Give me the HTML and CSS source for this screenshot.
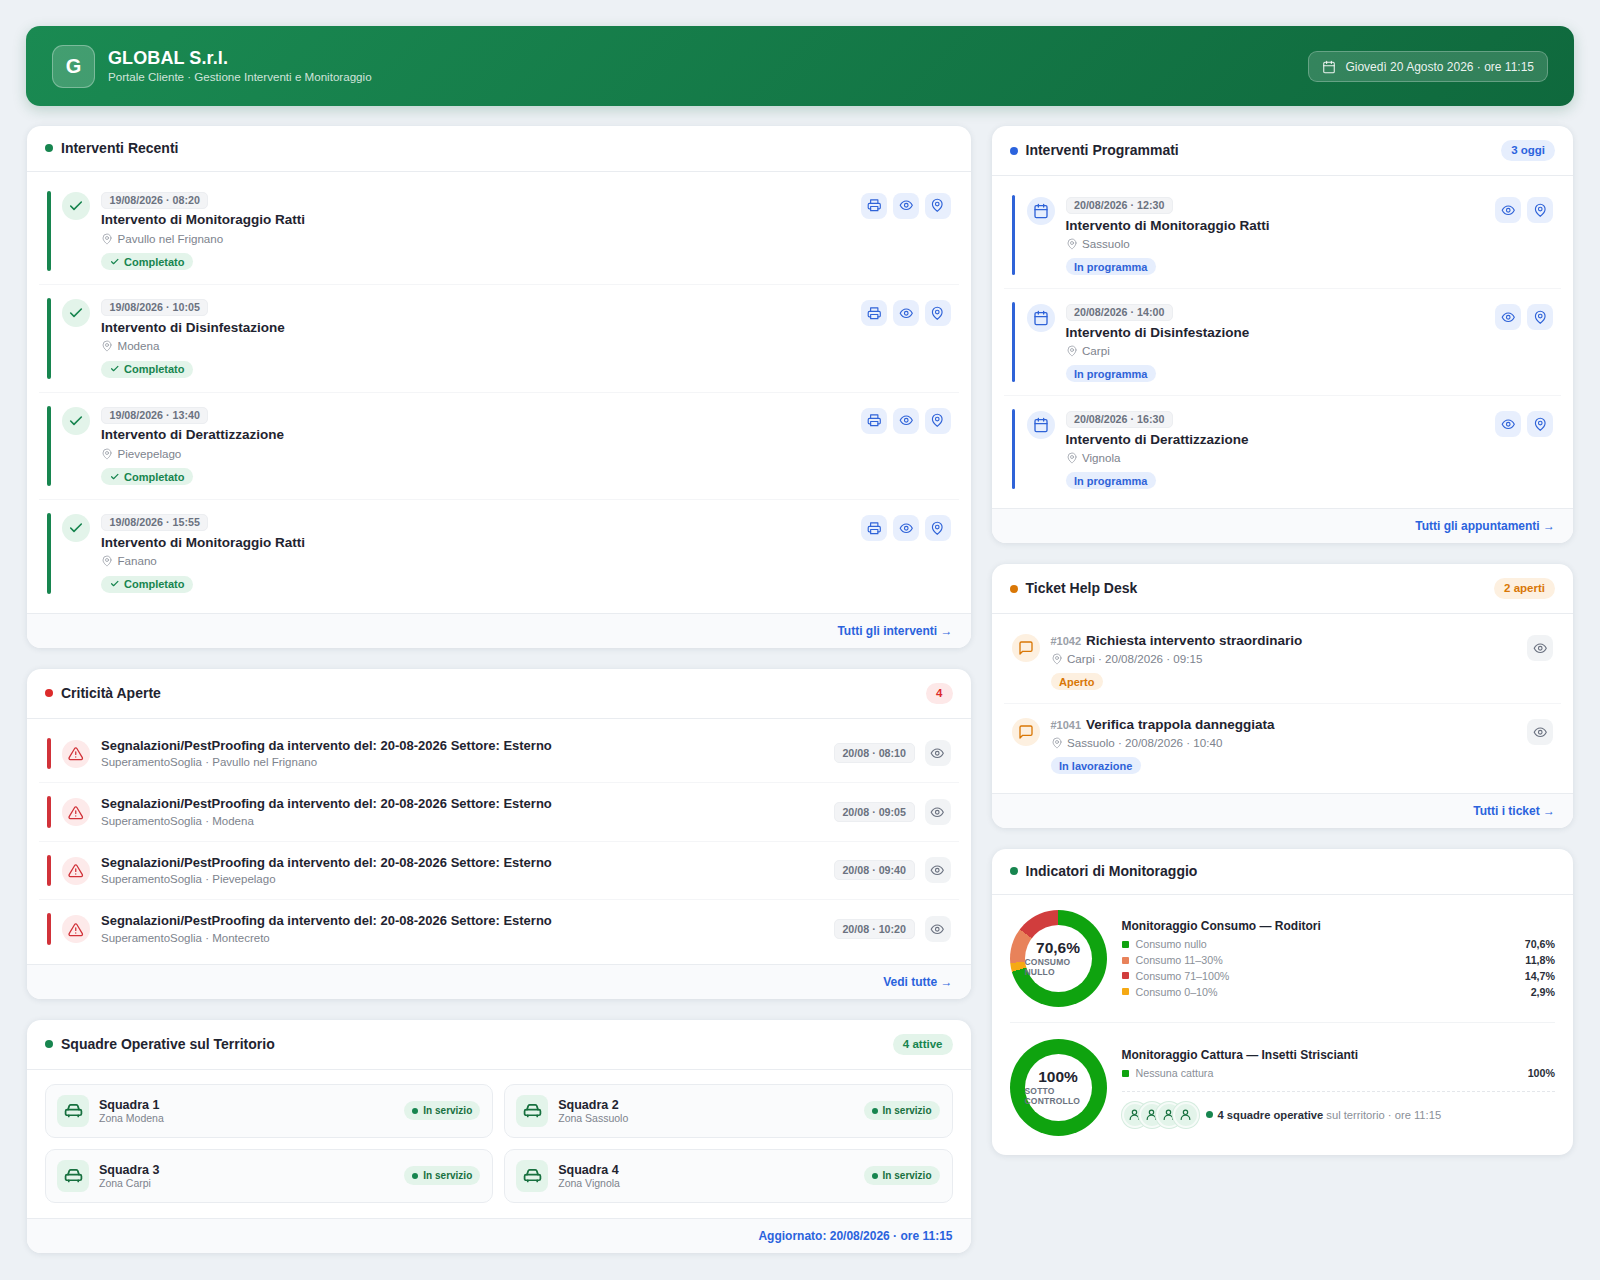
FILE: index.html
```html
<!DOCTYPE html>
<html lang="it">
<head>
    <meta charset="UTF-8">
    <meta name="viewport" content="width=device-width, initial-scale=1.0">
    <title>GLOBAL S.r.l. - Portale Cliente</title>
    <link rel="stylesheet" href="styles.css">
</head>
<body>
    <svg class="sprite" width="0" height="0">
        <symbol id="i-check" viewBox="0 0 24 24"><path d="M20 6 9 17l-5-5"/></symbol>
        <symbol id="i-print" viewBox="0 0 24 24"><path d="M6 9V3h12v6"/><path d="M6 18H4a2 2 0 0 1-2-2v-5a2 2 0 0 1 2-2h16a2 2 0 0 1 2 2v5a2 2 0 0 1-2 2h-2"/><path d="M6 14h12v7H6z"/></symbol>
        <symbol id="i-eye" viewBox="0 0 24 24"><path d="M2 12s3.600-7 10-7 10 7 10 7-3.600 7-10 7-10-7-10-7z"/><circle cx="12" cy="12" r="3"/></symbol>
        <symbol id="i-pin" viewBox="0 0 24 24"><path d="M20 10c0 6-8 12-8 12s-8-6-8-12a8 8 0 0 1 16 0z"/><circle cx="12" cy="10" r="3"/></symbol>
        <symbol id="i-cal" viewBox="0 0 24 24"><rect x="3" y="4" width="18" height="18" rx="2"/><path d="M16 2v4M8 2v4M3 10h18"/></symbol>
        <symbol id="i-alert" viewBox="0 0 24 24"><path d="M10.300 3.900 1.800 18a2 2 0 0 0 1.700 3h17a2 2 0 0 0 1.700-3L13.700 3.900a2 2 0 0 0-3.400 0z"/><path d="M12 9v4M12 17h.01"/></symbol>
        <symbol id="i-msg" viewBox="0 0 24 24"><path d="M21 15a2 2 0 0 1-2 2H7l-4 4V5a2 2 0 0 1 2-2h14a2 2 0 0 1 2 2z"/></symbol>
        <symbol id="i-car" viewBox="0 0 24 24"><path d="M5 11l1.500-4.500A2 2 0 0 1 8.400 5h7.200a2 2 0 0 1 1.900 1.500L19 11"/><rect x="2" y="11" width="20" height="7" rx="2"/><path d="M6 18v1.500M18 18v1.500"/></symbol>
        <symbol id="i-user" viewBox="0 0 24 24"><circle cx="12" cy="8" r="4"/><path d="M4 21a8 8 0 0 1 16 0"/></symbol>
    </svg>

    <header class="topbar">
        <div class="logo">G</div>
        <div class="brand">
            <div class="brand-name">GLOBAL S.r.l.</div>
            <div class="brand-sub">Portale Cliente · Gestione Interventi e Monitoraggio</div>
        </div>
        <div class="today"><svg class="ic"><use href="#i-cal"/></svg>Giovedì 20 Agosto 2026 · ore 11:15</div>
    </header>

    <main class="layout">
        <div class="col col-left">
            <section class="card">
                <div class="card-head">
                    <h2><span class="dot green"></span>Interventi Recenti</h2>
                </div>
                <div class="card-body">
                    <div class="item">
                        <span class="bar green"></span>
                        <span class="circle green-soft"><svg class="ic"><use href="#i-check"/></svg></span>
                        <div class="item-text">
                            <span class="chip">19/08/2026 · 08:20</span>
                            <div class="item-title">Intervento di Monitoraggio Ratti</div>
                            <div class="loc"><svg class="ic"><use href="#i-pin"/></svg>Pavullo nel Frignano</div>
                            <span class="tag tag-green"><svg class="ic"><use href="#i-check"/></svg>Completato</span>
                        </div>
                        <div class="actions">
                            <button class="btn"><svg class="ic"><use href="#i-print"/></svg></button>
                            <button class="btn"><svg class="ic"><use href="#i-eye"/></svg></button>
                            <button class="btn"><svg class="ic"><use href="#i-pin"/></svg></button>
                        </div>
                    </div>
                    <div class="item">
                        <span class="bar green"></span>
                        <span class="circle green-soft"><svg class="ic"><use href="#i-check"/></svg></span>
                        <div class="item-text">
                            <span class="chip">19/08/2026 · 10:05</span>
                            <div class="item-title">Intervento di Disinfestazione</div>
                            <div class="loc"><svg class="ic"><use href="#i-pin"/></svg>Modena</div>
                            <span class="tag tag-green"><svg class="ic"><use href="#i-check"/></svg>Completato</span>
                        </div>
                        <div class="actions">
                            <button class="btn"><svg class="ic"><use href="#i-print"/></svg></button>
                            <button class="btn"><svg class="ic"><use href="#i-eye"/></svg></button>
                            <button class="btn"><svg class="ic"><use href="#i-pin"/></svg></button>
                        </div>
                    </div>
                    <div class="item">
                        <span class="bar green"></span>
                        <span class="circle green-soft"><svg class="ic"><use href="#i-check"/></svg></span>
                        <div class="item-text">
                            <span class="chip">19/08/2026 · 13:40</span>
                            <div class="item-title">Intervento di Derattizzazione</div>
                            <div class="loc"><svg class="ic"><use href="#i-pin"/></svg>Pievepelago</div>
                            <span class="tag tag-green"><svg class="ic"><use href="#i-check"/></svg>Completato</span>
                        </div>
                        <div class="actions">
                            <button class="btn"><svg class="ic"><use href="#i-print"/></svg></button>
                            <button class="btn"><svg class="ic"><use href="#i-eye"/></svg></button>
                            <button class="btn"><svg class="ic"><use href="#i-pin"/></svg></button>
                        </div>
                    </div>
                    <div class="item">
                        <span class="bar green"></span>
                        <span class="circle green-soft"><svg class="ic"><use href="#i-check"/></svg></span>
                        <div class="item-text">
                            <span class="chip">19/08/2026 · 15:55</span>
                            <div class="item-title">Intervento di Monitoraggio Ratti</div>
                            <div class="loc"><svg class="ic"><use href="#i-pin"/></svg>Fanano</div>
                            <span class="tag tag-green"><svg class="ic"><use href="#i-check"/></svg>Completato</span>
                        </div>
                        <div class="actions">
                            <button class="btn"><svg class="ic"><use href="#i-print"/></svg></button>
                            <button class="btn"><svg class="ic"><use href="#i-eye"/></svg></button>
                            <button class="btn"><svg class="ic"><use href="#i-pin"/></svg></button>
                        </div>
                    </div>
                </div>
                <div class="card-foot"><a href="#">Tutti gli interventi <span class="arrow">→</span></a></div>
            </section>

            <section class="card">
                <div class="card-head">
                    <h2><span class="dot red"></span>Criticità Aperte</h2>
                    <span class="pill pill-red">4</span>
                </div>
                <div class="card-body">
                    <div class="item item-crit">
                        <span class="bar red"></span>
                        <span class="circle red-soft"><svg class="ic"><use href="#i-alert"/></svg></span>
                        <div class="item-text">
                            <div class="crit-title">Segnalazioni/PestProofing da intervento del: 20-08-2026 Settore: Esterno</div>
                            <div class="crit-sub">SuperamentoSoglia · Pavullo nel Frignano</div>
                        </div>
                        <span class="chip chip-time">20/08 · 08:10</span>
                        <button class="btn btn-grey"><svg class="ic"><use href="#i-eye"/></svg></button>
                    </div>
                    <div class="item item-crit">
                        <span class="bar red"></span>
                        <span class="circle red-soft"><svg class="ic"><use href="#i-alert"/></svg></span>
                        <div class="item-text">
                            <div class="crit-title">Segnalazioni/PestProofing da intervento del: 20-08-2026 Settore: Esterno</div>
                            <div class="crit-sub">SuperamentoSoglia · Modena</div>
                        </div>
                        <span class="chip chip-time">20/08 · 09:05</span>
                        <button class="btn btn-grey"><svg class="ic"><use href="#i-eye"/></svg></button>
                    </div>
                    <div class="item item-crit">
                        <span class="bar red"></span>
                        <span class="circle red-soft"><svg class="ic"><use href="#i-alert"/></svg></span>
                        <div class="item-text">
                            <div class="crit-title">Segnalazioni/PestProofing da intervento del: 20-08-2026 Settore: Esterno</div>
                            <div class="crit-sub">SuperamentoSoglia · Pievepelago</div>
                        </div>
                        <span class="chip chip-time">20/08 · 09:40</span>
                        <button class="btn btn-grey"><svg class="ic"><use href="#i-eye"/></svg></button>
                    </div>
                    <div class="item item-crit">
                        <span class="bar red"></span>
                        <span class="circle red-soft"><svg class="ic"><use href="#i-alert"/></svg></span>
                        <div class="item-text">
                            <div class="crit-title">Segnalazioni/PestProofing da intervento del: 20-08-2026 Settore: Esterno</div>
                            <div class="crit-sub">SuperamentoSoglia · Montecreto</div>
                        </div>
                        <span class="chip chip-time">20/08 · 10:20</span>
                        <button class="btn btn-grey"><svg class="ic"><use href="#i-eye"/></svg></button>
                    </div>
                </div>
                <div class="card-foot"><a href="#">Vedi tutte <span class="arrow">→</span></a></div>
            </section>

            <section class="card">
                <div class="card-head">
                    <h2><span class="dot green"></span>Squadre Operative sul Territorio</h2>
                    <span class="pill pill-green">4 attive</span>
                </div>
                <div class="squad-grid">
                    <div class="squad">
                        <span class="squad-icon"><svg class="ic"><use href="#i-car"/></svg></span>
                        <div class="squad-text"><div class="squad-name">Squadra 1</div><div class="squad-zone">Zona Modena</div></div>
                        <span class="squad-state"><i></i>In servizio</span>
                    </div>
                    <div class="squad">
                        <span class="squad-icon"><svg class="ic"><use href="#i-car"/></svg></span>
                        <div class="squad-text"><div class="squad-name">Squadra 2</div><div class="squad-zone">Zona Sassuolo</div></div>
                        <span class="squad-state"><i></i>In servizio</span>
                    </div>
                    <div class="squad">
                        <span class="squad-icon"><svg class="ic"><use href="#i-car"/></svg></span>
                        <div class="squad-text"><div class="squad-name">Squadra 3</div><div class="squad-zone">Zona Carpi</div></div>
                        <span class="squad-state"><i></i>In servizio</span>
                    </div>
                    <div class="squad">
                        <span class="squad-icon"><svg class="ic"><use href="#i-car"/></svg></span>
                        <div class="squad-text"><div class="squad-name">Squadra 4</div><div class="squad-zone">Zona Vignola</div></div>
                        <span class="squad-state"><i></i>In servizio</span>
                    </div>
                </div>
                <div class="card-foot"><a href="#">Aggiornato: 20/08/2026 · ore 11:15</a></div>
            </section>
        </div>

        <div class="col col-right">
            <section class="card">
                <div class="card-head">
                    <h2><span class="dot blue"></span>Interventi Programmati</h2>
                    <span class="pill pill-blue">3 oggi</span>
                </div>
                <div class="card-body">
                    <div class="item">
                        <span class="bar blue"></span>
                        <span class="circle blue-soft"><svg class="ic"><use href="#i-cal"/></svg></span>
                        <div class="item-text">
                            <span class="chip">20/08/2026 · 12:30</span>
                            <div class="item-title">Intervento di Monitoraggio Ratti</div>
                            <div class="loc"><svg class="ic"><use href="#i-pin"/></svg>Sassuolo</div>
                            <span class="tag tag-blue">In programma</span>
                        </div>
                        <div class="actions">
                            <button class="btn"><svg class="ic"><use href="#i-eye"/></svg></button>
                            <button class="btn"><svg class="ic"><use href="#i-pin"/></svg></button>
                        </div>
                    </div>
                    <div class="item">
                        <span class="bar blue"></span>
                        <span class="circle blue-soft"><svg class="ic"><use href="#i-cal"/></svg></span>
                        <div class="item-text">
                            <span class="chip">20/08/2026 · 14:00</span>
                            <div class="item-title">Intervento di Disinfestazione</div>
                            <div class="loc"><svg class="ic"><use href="#i-pin"/></svg>Carpi</div>
                            <span class="tag tag-blue">In programma</span>
                        </div>
                        <div class="actions">
                            <button class="btn"><svg class="ic"><use href="#i-eye"/></svg></button>
                            <button class="btn"><svg class="ic"><use href="#i-pin"/></svg></button>
                        </div>
                    </div>
                    <div class="item">
                        <span class="bar blue"></span>
                        <span class="circle blue-soft"><svg class="ic"><use href="#i-cal"/></svg></span>
                        <div class="item-text">
                            <span class="chip">20/08/2026 · 16:30</span>
                            <div class="item-title">Intervento di Derattizzazione</div>
                            <div class="loc"><svg class="ic"><use href="#i-pin"/></svg>Vignola</div>
                            <span class="tag tag-blue">In programma</span>
                        </div>
                        <div class="actions">
                            <button class="btn"><svg class="ic"><use href="#i-eye"/></svg></button>
                            <button class="btn"><svg class="ic"><use href="#i-pin"/></svg></button>
                        </div>
                    </div>
                </div>
                <div class="card-foot"><a href="#">Tutti gli appuntamenti <span class="arrow">→</span></a></div>
            </section>

            <section class="card">
                <div class="card-head">
                    <h2><span class="dot amber"></span>Ticket Help Desk</h2>
                    <span class="pill pill-amber">2 aperti</span>
                </div>
                <div class="card-body">
                    <div class="item item-ticket">
                        <span class="circle amber-soft"><svg class="ic"><use href="#i-msg"/></svg></span>
                        <div class="item-text">
                            <div class="item-title"><span class="ticket-no">#1042</span>Richiesta intervento straordinario</div>
                            <div class="loc"><svg class="ic"><use href="#i-pin"/></svg>Carpi · 20/08/2026 · 09:15</div>
                            <span class="tag tag-amber">Aperto</span>
                        </div>
                        <button class="btn btn-grey"><svg class="ic"><use href="#i-eye"/></svg></button>
                    </div>
                    <div class="item item-ticket">
                        <span class="circle amber-soft"><svg class="ic"><use href="#i-msg"/></svg></span>
                        <div class="item-text">
                            <div class="item-title"><span class="ticket-no">#1041</span>Verifica trappola danneggiata</div>
                            <div class="loc"><svg class="ic"><use href="#i-pin"/></svg>Sassuolo · 20/08/2026 · 10:40</div>
                            <span class="tag tag-blue">In lavorazione</span>
                        </div>
                        <button class="btn btn-grey"><svg class="ic"><use href="#i-eye"/></svg></button>
                    </div>
                </div>
                <div class="card-foot"><a href="#">Tutti i ticket <span class="arrow">→</span></a></div>
            </section>

            <section class="card">
                <div class="card-head">
                    <h2><span class="dot green"></span>Indicatori di Monitoraggio</h2>
                </div>
                <div class="monitor">
                    <div class="gauge-row gauge-first">
                        <div class="donut donut-consumo">
                            <div class="donut-hole">
                                <div class="donut-value">70,6%</div>
                                <div class="donut-label">Consumo nullo</div>
                            </div>
                        </div>
                        <div class="legend">
                            <div class="legend-title">Monitoraggio Consumo — Roditori</div>
                            <div class="legend-row"><i class="sw-green"></i>Consumo nullo<b>70,6%</b></div>
                            <div class="legend-row"><i class="sw-orange"></i>Consumo 11–30%<b>11,8%</b></div>
                            <div class="legend-row"><i class="sw-red"></i>Consumo 71–100%<b>14,7%</b></div>
                            <div class="legend-row"><i class="sw-amber"></i>Consumo 0–10%<b>2,9%</b></div>
                        </div>
                    </div>
                    <div class="gauge-row">
                        <div class="donut donut-cattura">
                            <div class="donut-hole">
                                <div class="donut-value">100%</div>
                                <div class="donut-label">Sotto controllo</div>
                            </div>
                        </div>
                        <div class="legend">
                            <div class="legend-title">Monitoraggio Cattura — Insetti Striscianti</div>
                            <div class="legend-row"><i class="sw-green"></i>Nessuna cattura<b>100%</b></div>
                            <div class="teams">
                                <div class="avatars">
                                    <span><svg class="ic"><use href="#i-user"/></svg></span>
                                    <span><svg class="ic"><use href="#i-user"/></svg></span>
                                    <span><svg class="ic"><use href="#i-user"/></svg></span>
                                    <span><svg class="ic"><use href="#i-user"/></svg></span>
                                </div>
                                <span class="dot green"></span>
                                <span class="teams-text"><b>4 squadre operative</b> sul territorio · ore 11:15</span>
                            </div>
                        </div>
                    </div>
                </div>
            </section>
        </div>
    </main>
</body>
</html>
```

FILE: styles.css
```css
* { box-sizing: border-box; }
body { margin: 0; padding: 26px; background: #edf1f5; color: #1f2430; font-family: "Liberation Sans", Arial, sans-serif; }
.sprite { position: absolute; }
.ic { display: block; width: 16px; height: 16px; fill: none; stroke: currentColor; stroke-width: 2; stroke-linecap: round; stroke-linejoin: round; flex: none; }

/* header */
.topbar { display: flex; align-items: center; height: 80px; padding: 0 26px; border-radius: 14px; color: #fff; background: linear-gradient(135deg, #1a8a52, #0f693d); box-shadow: 0 4px 14px rgba(20, 100, 60, .22); }
.logo { width: 43px; height: 43px; margin-right: 13px; border: 1px solid rgba(255,255,255,.3); border-radius: 11px; background: rgba(255,255,255,.18); font-size: 20px; font-weight: 700; line-height: 41px; text-align: center; }
.brand { flex: 1; }
.brand-name { font-size: 18px; font-weight: 700; line-height: 21px; letter-spacing: .1px; }
.brand-sub { margin-top: 1px; font-size: 11.600px; line-height: 14px; color: rgba(255,255,255,.8); }
.today { display: flex; align-items: center; gap: 9.500px; height: 31px; margin-top: 1px; padding: 0 13px; border: 1px solid rgba(255,255,255,.25); border-radius: 9px; background: rgba(255,255,255,.15); font-size: 12px; color: rgba(255,255,255,.92); }
.today .ic { width: 14px; height: 14px; stroke-width: 1.800; }

/* columns */
.layout { display: flex; gap: 21px; margin: 20px -1px 0 1px; }
.col { display: flex; flex-direction: column; gap: 21px; }
.col-left { width: 943.500px; }
.col-right { width: 581.500px; }

/* cards */
.card { overflow: hidden; border-radius: 14px; background: #fff; box-shadow: 0 1px 6px rgba(30, 50, 70, .1); }
.card-head { display: flex; align-items: center; justify-content: space-between; padding: 14px 18px; border-bottom: 1px solid #e9ecf0; }
.card-head h2 { display: flex; align-items: center; margin: 0; font-size: 14px; line-height: 16.500px; }
.dot { display: inline-block; width: 8px; height: 8px; margin-right: 8px; border-radius: 50%; flex: none; }
.green { background: #17854f; }
.red { background: #dc2b2b; }
.blue { background: #2b63dd; }
.amber { background: #d97706; }
.pill { height: 21px; padding: 0 10px; border-radius: 11px; font-size: 11.500px; font-weight: 700; line-height: 21px; }
.pill-red { background: #fde8e8; color: #dc2b2b; }
.pill-green { background: #e3f4ea; color: #17854f; }
.pill-blue { background: #e6eefd; color: #2b63dd; }
.pill-amber { background: #fdf0e0; color: #d97706; }
.card-body { padding: 6px 12px; }
.card-foot { height: 35px; padding: 0 18px; border-top: 1px solid #e9ecf0; background: #f9fafc; font-size: 12px; font-weight: 700; line-height: 34px; text-align: right; }
.card-foot a { color: #2b63dd; text-decoration: none; }
.arrow { font-size: 12px; font-weight: 400; }

/* list rows */
.item { display: flex; align-items: flex-start; padding: 13px 8px; border-bottom: 1px solid #f4f5f7; }
.item:last-child { border-bottom: 0; }
.bar { align-self: stretch; width: 3.500px; margin-right: 11.500px; border-radius: 2px; flex: none; }
.bar.blue { background: #2f63d8; }
.bar.red { background: #d13239; }
.circle { display: flex; align-items: center; justify-content: center; width: 28px; height: 28px; margin-top: 1px; border-radius: 50%; flex: none; }
.circle .ic { width: 16px; height: 16px; }
.green-soft { background: #e3f4ea; color: #17854f; }
.green-soft .ic { stroke-width: 2.400; }
.red-soft { background: #fdeaea; color: #d13239; }
.red-soft .ic { width: 15.500px; height: 15.500px; }
.blue-soft { background: #e6eefd; color: #2f63d8; }
.amber-soft { background: #fdf0e0; color: #d97706; }
.item-text { flex: 1; min-width: 0; margin-left: 11px; padding: 1px 0; }
.chip { display: block; width: fit-content; height: 17px; padding: 0 7.500px; border: 1px solid #eceef1; border-radius: 5px; background: #f3f4f6; color: #6b7280; font-size: 10.700px; font-weight: 700; line-height: 15px; }
.item-title { margin-top: 2.500px; font-size: 13.500px; font-weight: 700; line-height: 17px; }
.loc { display: flex; align-items: center; gap: 4.500px; margin-top: 3.500px; color: #7d838d; font-size: 11.600px; line-height: 14px; }
.loc .ic { width: 12px; height: 12px; stroke-width: 1.600; color: #9aa0a8; }
.tag { display: flex; align-items: center; gap: 5px; width: fit-content; height: 17px; margin-top: 7.500px; padding: 0 8.500px; border-radius: 9px; font-size: 11px; font-weight: 700; }
.tag .ic { width: 9.500px; height: 9.500px; stroke-width: 3; }
.tag-green { background: #e3f4ea; color: #17854f; }
.tag-blue { background: #e6eefd; color: #2f63d8; }
.tag-amber { background: #fdf0e0; color: #d97706; }
.actions { display: flex; gap: 5.600px; margin-top: 2px; }
.btn { display: flex; align-items: center; justify-content: center; width: 26px; height: 26px; padding: 0; border: 0; border-radius: 8px; background: #e8effd; color: #2f63d8; flex: none; }
.btn .ic { width: 14.500px; height: 14.500px; stroke-width: 1.900; }
.btn-grey { background: #f1f3f5; color: #6b7280; }

/* the right column rows sit half a pixel tighter */
.col-right .item-text { padding: 2px 0 0; }
.col-right .loc { margin-top: 3px; }
.col-right .circle { margin-top: 2px; }

/* criticita */
.item-crit { align-items: center; }
.item-crit .item-text { padding: 0; }
.crit-title { font-size: 13px; font-weight: 700; line-height: 16px; }
.crit-sub { margin-top: 2.500px; color: #7d838d; font-size: 11.500px; line-height: 13px; }
.chip-time { margin-right: 10px; height: 20px; padding: 0 7.500px; line-height: 18px; }

/* ticket */
.ticket-no { margin-right: 5px; color: #9aa0a8; font-size: 11px; }
.col-right .item-ticket .item-text { margin-left: 11px; padding: 1px 0 0; }
.item-ticket .item-title { margin-top: 0; line-height: 14px; }
.col-right .item-ticket .loc { margin-top: 4px; }
.item-ticket .tag { margin-top: 7px; }
.col-right .item-ticket .circle { margin-top: 1px; }
.item-ticket .btn { margin-top: 2px; }

/* squadre */
.squad-grid { display: grid; grid-template-columns: 1fr 1fr; gap: 11px; padding: 14px 18px 15px; }
.squad { display: flex; align-items: center; height: 54px; padding: 0 12px 0 11px; border: 1px solid #e9ecf0; border-radius: 10px; background: #fafbfc; }
.squad-icon { display: flex; align-items: center; justify-content: center; width: 32px; height: 32px; margin-right: 10px; border-radius: 8px; background: #e3f4ea; color: #17703f; flex: none; }
.squad-icon .ic { width: 19px; height: 19px; stroke-width: 2.200; }
.squad-text { flex: 1; }
.squad-name { font-size: 12.500px; font-weight: 700; line-height: 14px; }
.squad-zone { color: #7d838d; font-size: 10.500px; line-height: 12px; }
.squad-state { display: flex; align-items: center; gap: 5px; height: 19px; padding: 0 8px; border-radius: 10px; background: #e3f4ea; color: #17703f; font-size: 10px; font-weight: 700; }
.squad-state i { width: 6px; height: 6px; border-radius: 50%; background: #17854f; }

/* indicatori */
.monitor { padding: 15px 18px 19px; }
.gauge-row { display: flex; gap: 15px; }
.gauge-first { padding-bottom: 15.500px; margin-bottom: 15.500px; border-bottom: 1px solid #f1f3f5; }
.donut { position: relative; width: 97px; height: 97px; border-radius: 50%; flex: none; }
.donut-consumo { background: conic-gradient(#0fa30f 0 70.6%, #f5a914 70.6% 73.5%, #e8825a 73.5% 85.3%, #d13d3d 85.3% 100%); }
.donut-cattura { background: #0fa30f; }
.donut-hole { position: absolute; inset: 15px; display: flex; flex-direction: column; align-items: center; justify-content: center; border-radius: 50%; background: #fff; }
.donut-value { font-size: 15.500px; font-weight: 700; line-height: 18px; }
.donut-label { width: 100%; color: #6b7280; font-size: 8.500px; font-weight: 700; line-height: 10px; text-transform: uppercase; letter-spacing: .2px; }
.legend { flex: 1; padding-top: 8px; }
.legend-title { margin-bottom: 3px; font-size: 12px; font-weight: 700; line-height: 16px; }
.legend-row { display: flex; align-items: center; height: 15.800px; color: #8a8f98; font-size: 10.700px; }
.legend-row i { width: 7px; height: 7px; margin-right: 7px; border-radius: 1px; }
.legend-row b { margin-left: auto; color: #2a2f3a; }
.sw-green { background: #0fa30f; }
.sw-orange { background: #e8825a; }
.sw-red { background: #d13d3d; }
.sw-amber { background: #f5a914; }
.teams { display: flex; align-items: center; margin-top: 9.500px; padding-top: 10px; border-top: 1px dashed #e4e7eb; }
.avatars { display: flex; margin-right: 7px; }
.avatars span { display: flex; align-items: center; justify-content: center; width: 26px; height: 26px; margin-right: -9px; border: 2px solid #f6fbf8; border-radius: 50%; background: #e3f4ea; box-shadow: 0 0 0 1px #d5ecdf; color: #17703f; }
.avatars span:last-child { margin-right: 0; }
.avatars .ic { width: 13px; height: 13px; stroke-width: 2.200; }
.teams .dot { width: 7px; height: 7px; margin-right: 5px; }
.teams-text { color: #8a8f98; font-size: 11.200px; }
.teams-text b { color: #2a2f3a; }
```
